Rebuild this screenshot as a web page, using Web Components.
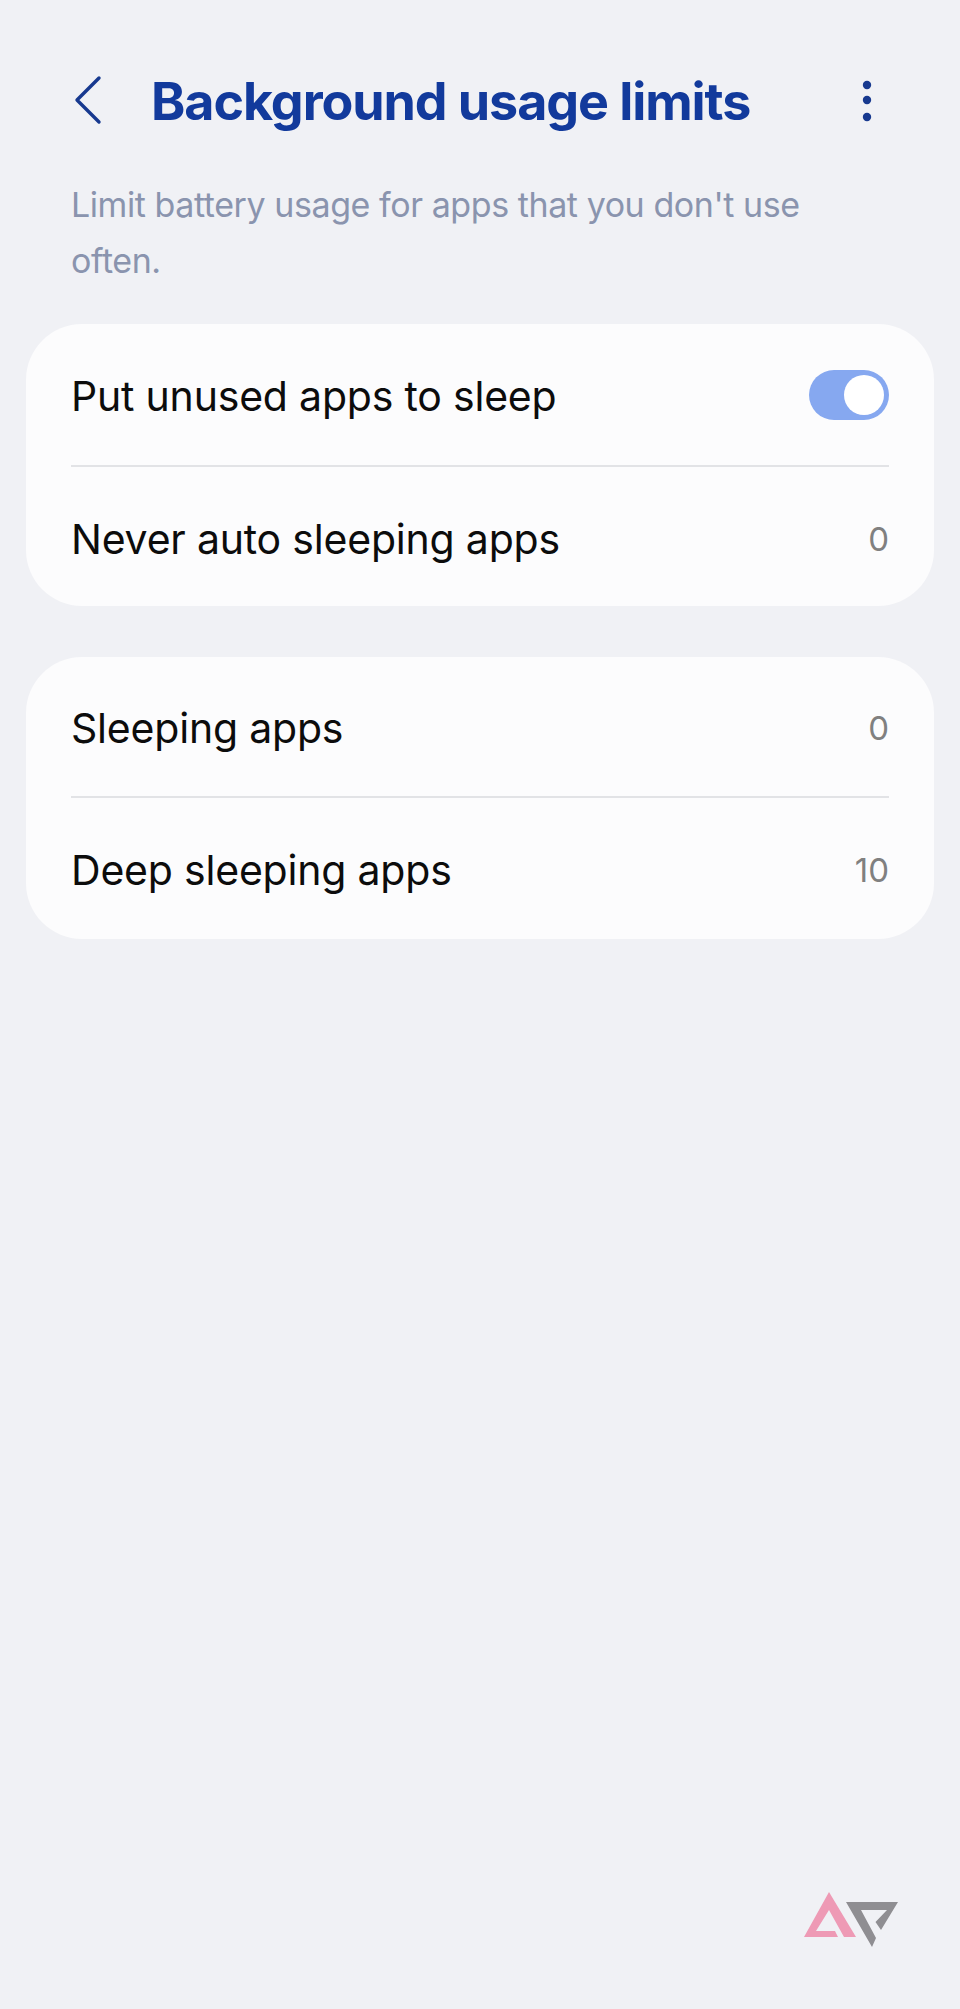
<!DOCTYPE html>
<html>
<head>
<meta charset="utf-8">
<style>
  html, body { margin: 0; background: #f0f1f5; }
  body { font-family: "Inter", "Liberation Sans", sans-serif; }
</style>
</head>
<body>
<settings-page>
  <page-header slot="header" title="Background usage limits"></page-header>
  <p slot="desc">Limit battery usage for apps that you don't use often.</p>
  <settings-card>
    <settings-row style="height:143px" label="Put unused apps to sleep"><toggle-switch checked></toggle-switch></settings-row>
    <settings-row style="height:139px;padding-top:5px" label="Never auto sleeping apps" value="0"></settings-row>
  </settings-card>
  <settings-card>
    <settings-row label="Sleeping apps" value="0"></settings-row>
    <settings-row label="Deep sleeping apps" value="10"></settings-row>
  </settings-card>
  <ap-logo slot="logo"></ap-logo>
</settings-page>

<script>
class SettingsPage extends HTMLElement {
  constructor() {
    super();
    this.attachShadow({ mode: 'open' });
    this.shadowRoot.innerHTML = `
      <style>
        :host { display: flex; flex-direction: column; height: 2009px; box-sizing: border-box; padding: 64px 26px 0; }
        .desc { padding: 41px 100px 0 45px; height: 188px; box-sizing: border-box; }
        ::slotted(p) { margin: 0; font-size: 34px; line-height: 56px; color: #8a94ae; letter-spacing: -0.43px; }
        .cards { display: flex; flex-direction: column; gap: 51px; }
        .logo { margin-top: auto; display: flex; justify-content: flex-end; padding: 0 35px 61px 0; }
      </style>
      <slot name="header"></slot>
      <div class="desc"><slot name="desc"></slot></div>
      <div class="cards"><slot></slot></div>
      <div class="logo"><slot name="logo"></slot></div>
    `;
  }
}

class PageHeader extends HTMLElement {
  constructor() {
    super();
    this.attachShadow({ mode: 'open' });
    this.shadowRoot.innerHTML = `
      <style>
        :host { display: flex; align-items: center; height: 72px; color: #123a9c; }
        .back { width: 125px; flex: none; display: block; }
        h1 { flex: 1; margin: 0; padding-top: 4px; font-size: 52px; font-weight: 700; line-height: 72px; letter-spacing: -1.08px; white-space: nowrap; }
        .more { width: 10px; flex: none; margin-right: 62px; display: block; }
      </style>
      <svg class="back" width="125" height="72" viewBox="0 0 125 72" fill="none">
        <path d="M73 14 L51 36 L73 58" stroke="#17398f" stroke-width="3.4" stroke-linecap="round" stroke-linejoin="round"/>
      </svg>
      <h1>${this.getAttribute('title')}</h1>
      <svg class="more" width="10" height="72" viewBox="0 0 10 72" fill="#17398f">
        <circle cx="5" cy="21" r="4.2"/><circle cx="5" cy="36" r="4.2"/><circle cx="5" cy="53" r="4.2"/>
      </svg>
    `;
  }
}

class SettingsCard extends HTMLElement {
  constructor() {
    super();
    this.attachShadow({ mode: 'open' });
    this.shadowRoot.innerHTML = `
      <style>
        :host { display: flex; flex-direction: column; background: #fcfcfd; border-radius: 56px; padding: 0 45px 0 45px; }
        ::slotted(settings-row:not(:last-child)) { border-bottom: 2px solid #e2e3e6; }
      </style>
      <slot></slot>
    `;
  }
}

class SettingsRow extends HTMLElement {
  constructor() {
    super();
    this.attachShadow({ mode: 'open' });
    const value = this.getAttribute('value');
    this.shadowRoot.innerHTML = `
      <style>
        :host { display: flex; align-items: center; justify-content: space-between; height: 141px; padding-top: 2px; box-sizing: border-box; }
        .label { font-size: 41px; color: #0c0c0c; letter-spacing: -0.2px; }
        .value { font-size: 33px; color: #808080; }
      </style>
      <span class="label">${this.getAttribute('label')}</span>
      ${value !== null ? `<span class="value">${value}</span>` : '<slot></slot>'}
    `;
  }
}

class ToggleSwitch extends HTMLElement {
  constructor() {
    super();
    this.attachShadow({ mode: 'open' });
    this.shadowRoot.innerHTML = `
      <style>
        :host { display: flex; justify-content: flex-end; align-items: center; box-sizing: border-box; width: 80px; height: 50px; margin-top: -2px; padding-right: 5px; border-radius: 25px; background: #86a8f0; }
        .knob { width: 40px; height: 40px; border-radius: 50%; background: #fff; }
      </style>
      <div class="knob"></div>
    `;
  }
}

class ApLogo extends HTMLElement {
  constructor() {
    super();
    this.attachShadow({ mode: 'open' });
    this.shadowRoot.innerHTML = `
      <style>:host { display: block; width: 95px; height: 56px; } svg { display: block; }</style>
      <svg width="95" height="56" viewBox="0 0 95 56">
        <path fill="#ee9ab5" d="M25 0 L52 45 L40 45 L25 18 L12 39 L31 39 L34 45 L0 45 Z"/>
        <path fill="#8f8e92" d="M42 10 H94 L77 38 L71.5 30 L83 18 H57 L72 46 L68 55 Z"/>
      </svg>
    `;
  }
}

customElements.define('settings-page', SettingsPage);
customElements.define('page-header', PageHeader);
customElements.define('settings-card', SettingsCard);
customElements.define('settings-row', SettingsRow);
customElements.define('toggle-switch', ToggleSwitch);
customElements.define('ap-logo', ApLogo);
</script>
</body>
</html>
